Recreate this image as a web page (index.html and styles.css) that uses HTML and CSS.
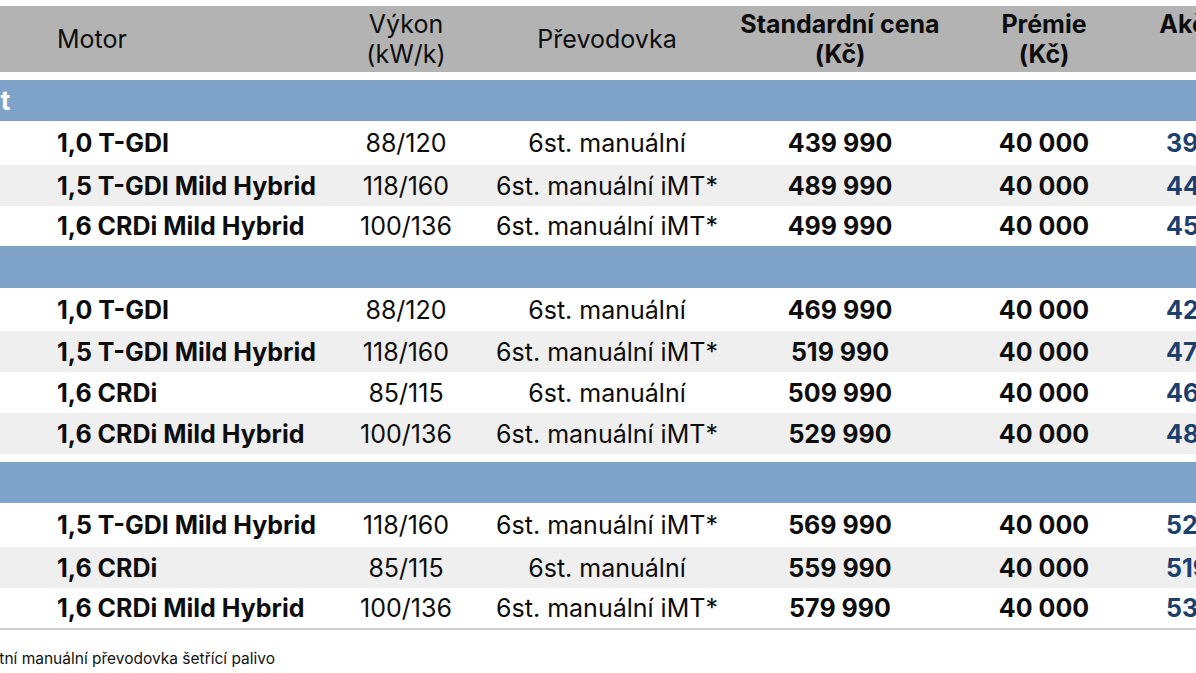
FILE: index.html
```html
<!DOCTYPE html>
<html lang="cs">
<head>
<meta charset="utf-8">
<title>Ceník</title>
<link rel="stylesheet" href="styles.css">
</head>
<body>
<div class="viewport">
  <div class="sheet">
    <table class="price">
      <colgroup>
        <col class="c-motor"><col class="c-power"><col class="c-gear"><col class="c-std"><col class="c-prem"><col class="c-akce">
      </colgroup>
      <thead>
        <tr>
          <th class="motor">Motor</th>
          <th>Výkon<br>(kW/k)</th>
          <th>Převodovka</th>
          <th class="b">Standardní cena<br>(Kč)</th>
          <th class="b">Prémie<br>(Kč)</th>
          <th class="b">Akční cena<br>(Kč)</th>
        </tr>
      </thead>
      <tbody>
        <tr class="trim gap h41"><td colspan="6"><span class="trim-name">Comfort</span></td></tr>
        <tr class="h44"><td class="motor">1,0 T-GDI</td><td>88/120</td><td>6st. manuální</td><td class="b">439 990</td><td class="b">40 000</td><td class="akce">399 990</td></tr>
        <tr class="alt h41"><td class="motor">1,5 T-GDI Mild Hybrid</td><td>118/160</td><td>6st. manuální iMT*</td><td class="b">489 990</td><td class="b">40 000</td><td class="akce">449 990</td></tr>
        <tr class="h40"><td class="motor">1,6 CRDi Mild Hybrid</td><td>100/136</td><td>6st. manuální iMT*</td><td class="b">499 990</td><td class="b">40 000</td><td class="akce">459 990</td></tr>

        <tr class="trim h42"><td colspan="6"><span class="trim-name">Smart</span></td></tr>
        <tr class="h43"><td class="motor">1,0 T-GDI</td><td>88/120</td><td>6st. manuální</td><td class="b">469 990</td><td class="b">40 000</td><td class="akce">429 990</td></tr>
        <tr class="alt h41"><td class="motor">1,5 T-GDI Mild Hybrid</td><td>118/160</td><td>6st. manuální iMT*</td><td class="b">519 990</td><td class="b">40 000</td><td class="akce">479 990</td></tr>
        <tr class="h41"><td class="motor">1,6 CRDi</td><td>85/115</td><td>6st. manuální</td><td class="b">509 990</td><td class="b">40 000</td><td class="akce">469 990</td></tr>
        <tr class="alt h41"><td class="motor">1,6 CRDi Mild Hybrid</td><td>100/136</td><td>6st. manuální iMT*</td><td class="b">529 990</td><td class="b">40 000</td><td class="akce">489 990</td></tr>

        <tr class="trim gap h41"><td colspan="6"><span class="trim-name">Style</span></td></tr>
        <tr class="h44"><td class="motor">1,5 T-GDI Mild Hybrid</td><td>118/160</td><td>6st. manuální iMT*</td><td class="b">569 990</td><td class="b">40 000</td><td class="akce">529 990</td></tr>
        <tr class="alt h41"><td class="motor">1,6 CRDi</td><td>85/115</td><td>6st. manuální</td><td class="b">559 990</td><td class="b">40 000</td><td class="akce">519 990</td></tr>
        <tr class="h40 last"><td class="motor">1,6 CRDi Mild Hybrid</td><td>100/136</td><td>6st. manuální iMT*</td><td class="b">579 990</td><td class="b">40 000</td><td class="akce">539 990</td></tr>
      </tbody>
    </table>
    <p class="note">* iMT – inteligentní manuální převodovka šetřící palivo</p>
  </div>
</div>
</body>
</html>
```

FILE: styles.css
```css
html, body {
  margin: 0;
  padding: 0;
  background: #ffffff;
  overflow: hidden;
}

.viewport {
  width: 1196px;
  height: 673px;
  overflow: hidden;
  padding-top: 6px;
  box-sizing: border-box;
}

.sheet {
  margin-left: -150px;
  width: 1560px;
}

.price {
  border-collapse: collapse;
  table-layout: fixed;
  font-family: Inter, "Noto Sans", sans-serif;
  font-size: 25px;
  color: #0d0d0d;
}

.c-motor { width: 480px; }
.c-power { width: 152px; }
.c-gear { width: 250px; }
.c-std { width: 216px; }
.c-prem { width: 192px; }
.c-akce { width: 174px; }

.price th {
  background: #b3b3b3;
  height: 66px;
  padding: 0;
  font-weight: 400;
  line-height: 30px;
  text-align: center;
  vertical-align: middle;
  white-space: nowrap;
}

.price th.b { font-weight: 700; }

.price td {
  padding: 0;
  text-align: center;
  vertical-align: middle;
  white-space: nowrap;
  line-height: 28px;
}

.price .motor {
  text-align: left;
  padding-left: 207px;
}

.price td.motor { font-weight: 700; }
.price td.b { font-weight: 700; }
.price td.akce {
  font-weight: 700;
  color: #1b3f6f;
  text-align: left;
  padding-left: 26px;
}

.price tr.alt td { background: #efefef; }

.price tr.trim td {
  background: #7fa2c8;
  text-align: left;
  padding-left: 55px;
}

.price tr.trim.gap td { border-top: 8px solid #ffffff; }

.trim-name {
  color: #ffffff;
  font-weight: 700;
  font-size: 26px;
}

.price tr.last td { border-bottom: 2px solid #cfcfcf; }

.h40 td { height: 40px; }
.h41 td { height: 41px; }
.h42 td { height: 42px; }
.h43 td { height: 43px; }
.h44 td { height: 44px; }

.note {
  width: 425px;
  margin: 19px 0 0 0;
  text-align: right;
  white-space: nowrap;
  font-family: Inter, "Noto Sans", sans-serif;
  font-size: 15.5px;
  color: #111111;
}
```
